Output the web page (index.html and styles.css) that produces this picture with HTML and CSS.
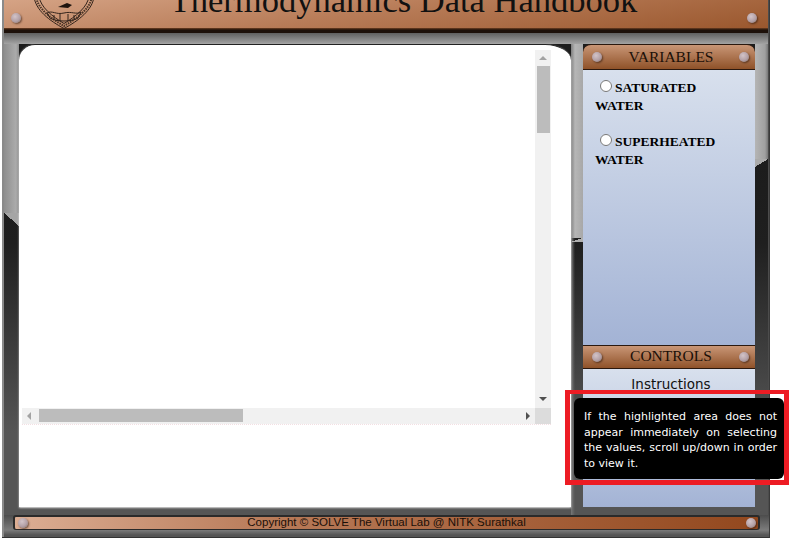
FILE: index.html
```html
<!DOCTYPE html>
<html lang="en">
<head>
    <meta charset="UTF-8">
    <title>Thermodynamics Data Handbook</title>
    <link rel="stylesheet" href="styles.css">
</head>
<body>
    <div class="frame">
        <header class="top-bar">
            <span class="rivet rivet-left"></span>
            <svg class="emblem" viewBox="0 0 60 29" width="60" height="29">
                <path d="M0 -4 C1 10 16 21 30 28.500 C44 21 59 10 60 -4" fill="none" stroke="#33241c" stroke-width="1"/>
                <path d="M5 -4 C6 7 19 17 30 23.500 C41 17 54 7 55 -4" fill="none" stroke="#33241c" stroke-width="1"/>
                <path d="M2.500 -2 C4 9 18 19 30 26 C42 19 56 9 57.500 -2" fill="none" stroke="#4a3527" stroke-width="2" stroke-dasharray="1.500 1"/>
                <path d="M24 7 L33 3 L38 5 L34 8 Z" fill="#1f140e"/>
                <path d="M13 13 C18 10 22 15 30 13 C38 11 42 15 47 12 L44 18 C38 22 22 22 16 18 Z" fill="none" stroke="#33241c" stroke-width="1"/>
                <path d="M20 15 V19 M26 14 V21 M34 14 V21 M40 15 V19" stroke="#33241c" stroke-width="1"/>
            </svg>
            <h1>Thermodynamics Data Handbook</h1>
            <span class="rivet rivet-right"></span>
        </header>

        <div class="middle">
            <main class="content">
                <div class="scroll-area">
                    <div class="scroll-main">
                        <div class="view"></div>
                        <div class="v-scroll">
                            <span class="arrow arrow-up"></span>
                            <span class="v-thumb"></span>
                            <span class="arrow arrow-down"></span>
                        </div>
                    </div>
                    <div class="h-scroll">
                        <span class="arrow arrow-left"></span>
                        <span class="h-thumb"></span>
                        <span class="arrow arrow-right"></span>
                        <span class="corner"></span>
                    </div>
                </div>
            </main>

            <aside class="side">
                <div class="plate plate-first">
                    <span class="rivet rivet-left"></span>
                    VARIABLES
                    <span class="rivet rivet-right"></span>
                </div>
                <div class="variables">
                    <label class="option"><input type="radio" name="variable">SATURATED WATER</label>
                    <label class="option"><input type="radio" name="variable">SUPERHEATED WATER</label>
                </div>
                <div class="plate">
                    <span class="rivet rivet-left"></span>
                    CONTROLS
                    <span class="rivet rivet-right"></span>
                </div>
                <div class="controls">
                    <p class="instructions">Instructions</p>
                </div>
            </aside>
        </div>

        <footer class="bottom-bar">
            <span class="rivet rivet-left"></span>
            Copyright © SOLVE The Virtual Lab @ NITK Surathkal
            <span class="rivet rivet-right"></span>
        </footer>
    </div>

    <div class="tooltip-box">
        <p class="tooltip">If the highlighted area does not appear immediately on selecting the values, scroll up/down in order to view it.</p>
    </div>
</body>
</html>
```

FILE: styles.css
```css
html, body {
    margin: 0;
    padding: 0;
    height: 100%;
    background-color: #fff;
    overflow: hidden;
}

.frame {
    box-sizing: border-box;
    width: 768px;
    height: 538px;
    margin-left: 2px;
    display: flex;
    flex-direction: column;
    padding: 0 1px 0 2px;
    background-color: #5a5a5a;
    background-image: linear-gradient(to bottom, #4c4c4c 515px, #7c7c7c 530px, #555 535px);
    border-bottom: 1px solid #333;
    border-right: 1px solid #3a3a3a;
    box-shadow: inset 2px 0 0 #8a8a8a;
}

.top-bar {
    position: relative;
    flex: 0 0 33px;
    background:
        linear-gradient(to bottom, transparent 28px, #6e3f22 28px, #1d1009 30px, #1d1009 33px),
        linear-gradient(172deg, #d5a385 0%, #b87c58 45%, #98552b 100%);
    overflow: hidden;
    text-align: center;
}

.top-bar h1 {
    margin: -20px 0 0 0;
    padding-left: 35px;
    font-family: "Liberation Serif", serif;
    font-weight: normal;
    font-size: 34.5px;
    line-height: 40px;
    color: #111;
}

.emblem {
    position: absolute;
    left: 30px;
    top: 0;
}

.rivet {
    position: absolute;
    top: 50%;
    width: 10px;
    height: 10px;
    margin-top: -5px;
    border-radius: 50%;
    background: radial-gradient(circle at 40% 35%, #d3c4c8 0, #b3a0a6 55%, #7a6a66 100%);
    box-shadow: 1px 1px 2px rgba(40, 20, 10, 0.6);
}

.rivet-left {
    left: 9px;
}

.rivet-right {
    right: 6px;
}

.top-bar .rivet {
    top: 18px;
}

.top-bar .rivet-left {
    left: 7px;
}

.top-bar .rivet-right {
    right: 11px;
}

/* gutters around the panels: light at the top, dark below a slanted edge */
.middle {
    flex: 1;
    display: flex;
    min-height: 0;
    box-sizing: border-box;
    padding: 11px 0 8px 15px;
    background:
        linear-gradient(to bottom, #5f5f5f, #a3a3a3) top / 100% 11px no-repeat,
        linear-gradient(to right, #8e8e8e, #ababab 12px, #8a8a8a) 0 0 / 15px 180px no-repeat,
        linear-gradient(to top right, transparent 50%, #a5a5a5 50%) 0 180px / 15px 13px no-repeat,
        linear-gradient(to right, #7f7f7f, #b6b6b6 4px, #a8a8a8) 567px 0 / 12px 205px no-repeat,
        linear-gradient(to bottom right, transparent 50%, #b0b0b0 50%) 567px 205px / 12px 4px no-repeat,
        linear-gradient(to right, #777, transparent) 567px 0 / 4px 100% no-repeat,
        linear-gradient(to right, #b5b5b5, #a0a0a0 10px, #777) 751px 0 / 13px 126px no-repeat,
        linear-gradient(to bottom right, #aaa 50%, transparent 50%) 751px 126px / 13px 8px no-repeat,
        linear-gradient(to bottom, #1c1c1c 130px, #1f1f1f 210px, #555 400px);
}

.content {
    box-sizing: border-box;
    width: 552px;
    padding-top: 5px;
    background: #fff;
    border-radius: 16px 26px 0 0 / 16px 16px 0 0;
    border-top: 1px solid #222;
    box-shadow: 0 1px 2px rgba(255, 255, 255, 0.8);
}

.scroll-area {
    margin-left: 3px;
    width: 529px;
    border-bottom: 1px dotted #f3dfe3;
}

.scroll-main {
    display: flex;
    height: 358px;
}

.view {
    flex: 1;
}

.v-scroll {
    position: relative;
    width: 16px;
    background: #f1f1f1;
}

.v-thumb {
    position: absolute;
    left: 2px;
    top: 16px;
    width: 13px;
    height: 67px;
    background: #bcbcbc;
}

.h-scroll {
    position: relative;
    height: 16px;
    background: #f1f1f1;
}

.h-thumb {
    position: absolute;
    left: 17px;
    top: 1px;
    width: 204px;
    height: 13px;
    background: #bcbcbc;
}

.corner {
    position: absolute;
    right: 0;
    top: 0;
    width: 16px;
    height: 16px;
    background: #dcdcdc;
}

.arrow {
    position: absolute;
    width: 0;
    height: 0;
    border: 4px solid transparent;
}

.arrow-up {
    left: 4px;
    top: 2px;
    border-bottom-color: #a3a3a3;
}

.arrow-down {
    left: 4px;
    bottom: 3px;
    border-top-color: #505050;
}

.arrow-left {
    left: 1px;
    top: 4px;
    border-right-color: #a3a3a3;
}

.arrow-right {
    right: 17px;
    top: 4px;
    border-left-color: #505050;
}

.side {
    width: 172px;
    margin-left: 12px;
    display: flex;
    flex-direction: column;
}

.plate {
    position: relative;
    flex: 0 0 24px;
    box-sizing: border-box;
    padding-left: 4px;
    background: linear-gradient(to bottom, #c99676 0%, #8f5229 100%);
    border-top: 1px solid #2b180e;
    border-bottom: 1px solid #2b180e;
    text-align: center;
    font-family: "Liberation Serif", serif;
    font-size: 15.5px;
    line-height: 20px;
    color: #1b1008;
}

.plate-first {
    flex-basis: 26px;
    line-height: 23px;
    border-radius: 8px 8px 0 0;
}

.variables {
    flex: 0 0 275px;
    box-sizing: border-box;
    padding: 9px 12px;
    background: linear-gradient(to bottom, #d8e0ed 0%, #a3b3d5 100%);
    font-family: "Liberation Serif", serif;
    font-weight: bold;
    font-size: 13.5px;
    line-height: 18px;
    color: #000;
}

.option {
    display: block;
    margin-bottom: 18px;
    width: 130px;
}

.option input {
    margin: 0 3px 0 5px;
    width: 12px;
    height: 12px;
}

.controls {
    flex: 1;
    background: linear-gradient(to bottom, #d8e0ed 0%, #a3b3d5 100%);
}

.instructions {
    margin: 7px 0 0 0;
    padding-left: 4px;
    text-align: center;
    font-family: "Comic Sans MS", "DejaVu Sans", sans-serif;
    font-size: 13.5px;
    color: #111;
}

.bottom-bar {
    position: relative;
    flex: 0 0 15px;
    box-sizing: border-box;
    margin: 0 8px 7px 9px;
    background: linear-gradient(to right, #dcae94 0%, #b87a58 35%, #93481e 100%);
    border: 2px solid #2a2a2a;
    border-bottom-width: 1px;
    border-radius: 3px;
    text-align: center;
    font-family: "Liberation Sans", sans-serif;
    font-size: 11.5px;
    line-height: 11px;
    color: #1a0f08;
}

.bottom-bar .rivet-left {
    left: 3px;
}

.bottom-bar .rivet-right {
    right: 2px;
}

.tooltip-box {
    position: absolute;
    left: 565px;
    top: 390px;
    width: 224px;
    height: 95px;
    box-sizing: border-box;
    border: 5px solid #ed1c24;
    border-top-width: 4px;
    padding: 4px 0 0 4px;
}

.tooltip {
    margin: 0;
    box-sizing: border-box;
    height: 81px;
    width: 210px;
    padding: 11px 7px 0 10px;
    background: #000;
    border-radius: 6px;
    text-align: justify;
    font-family: "DejaVu Sans", sans-serif;
    font-size: 11px;
    line-height: 15.5px;
    color: #fff;
}
```
